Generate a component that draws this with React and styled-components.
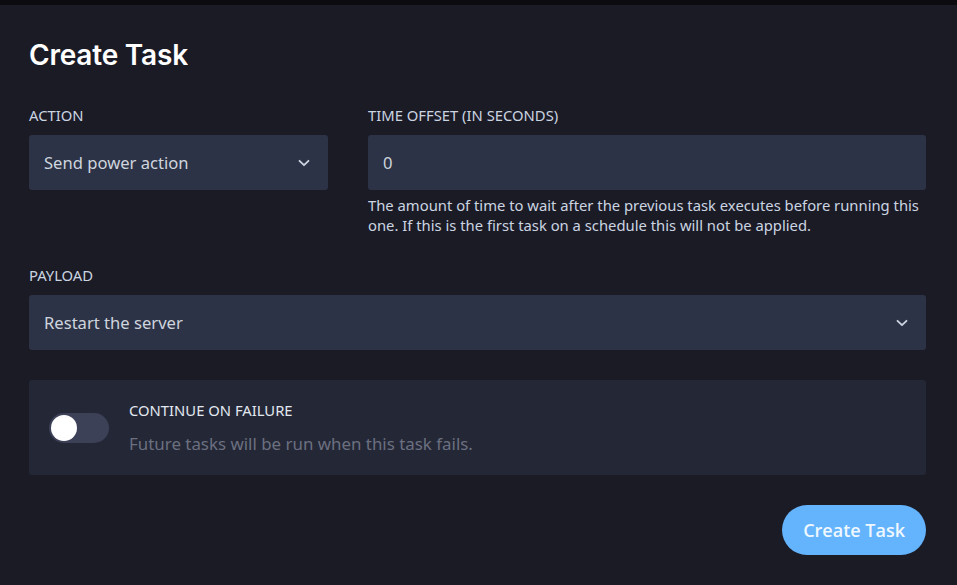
import React, { useState } from "react";
import styled, { createGlobalStyle } from "styled-components";

const GlobalStyle = createGlobalStyle`
  html, body {
    margin: 0;
    padding: 0;
    background: #1b1b26;
  }
  body {
    font-family: "Noto Sans", "Open Sans", sans-serif;
  }
`;

const TopStrip = styled.div`
  height: 5px;
  background: #0b0b10;
`;

const Page = styled.div`
  padding: 30px 31px 30px 29px;
  background: #1b1b26;
  color: #e2e8f0;
`;

const Title = styled.h2`
  margin: 0 0 30px;
  font-family: Inter, "Noto Sans", sans-serif;
  font-size: 28px;
  font-weight: 600;
  line-height: 40px;
  color: #ffffff;
  letter-spacing: -0.2px;
`;

const Row = styled.div`
  display: flex;
  gap: 40px;
`;

const Field = styled.div`
  display: flex;
  flex-direction: column;
  width: ${(p) => (p.width ? `${p.width}px` : "auto")};
  flex: ${(p) => (p.width ? "none" : 1)};
  margin-bottom: ${(p) => p.mb || 0}px;
`;

const Label = styled.label`
  font-size: 14.8px;
  line-height: 20px;
  color: #cbd5e1;
  text-transform: uppercase;
  margin-bottom: 10px;
`;

const Box = styled.div`
  height: 55px;
  box-sizing: border-box;
  display: flex;
  align-items: center;
  justify-content: space-between;
  padding: 0 18px 0 15px;
  background: #2d3346;
  border-radius: 3px;
  font-size: 16.6px;
  color: #cfd5de;
`;

const Chevron = () => (
  <svg width="12" height="8" viewBox="0 0 12 8" fill="none" stroke="#cbd5e1" strokeWidth="1.8" strokeLinecap="round" strokeLinejoin="round">
    <path d="M1.5 1.8l4.5 4.4 4.5-4.4" />
  </svg>
);

const Help = styled.p`
  margin: 5px 0 0;
  font-size: 14.8px;
  line-height: 20px;
  color: #cbd5e1;
`;

const Card = styled.div`
  margin-top: 30px;
  height: 95px;
  box-sizing: border-box;
  background: #242736;
  border-radius: 3px;
  display: flex;
  align-items: center;
  padding: 0 20px;
  gap: 20px;
`;

const Track = styled.button`
  width: 60px;
  height: 30px;
  border: none;
  padding: 0;
  border-radius: 15px;
  background: ${(p) => (p.on ? "#3b82f6" : "#3d4157")};
  position: relative;
  cursor: pointer;
  flex: none;
  margin-top: 1px;
`;

const Knob = styled.span`
  position: absolute;
  top: 2px;
  left: ${(p) => (p.on ? "32px" : "2px")};
  width: 26px;
  height: 26px;
  border-radius: 50%;
  background: #ffffff;
  transition: left 0.15s;
`;

const CardText = styled.div`
  display: flex;
  flex-direction: column;
`;

const CardTitle = styled.span`
  font-size: 14.8px;
  line-height: 20px;
  color: #e2e8f0;
  text-transform: uppercase;
`;

const CardDesc = styled.span`
  margin-top: 13px;
  font-size: 16.9px;
  line-height: 22px;
  color: #6b7080;
`;

const Footer = styled.div`
  display: flex;
  justify-content: flex-end;
  margin-top: 30px;
`;

const Submit = styled.button`
  height: 50px;
  padding: 0 21px;
  border: none;
  border-radius: 25px;
  background: #63b3fd;
  color: #f0f8ff;
  font-family: "Open Sans", "Noto Sans", sans-serif;
  font-size: 18px;
  font-weight: 600;
  cursor: pointer;
`;

export default function App() {
  const [on, setOn] = useState(false);
  return (
    <>
      <GlobalStyle />
      <TopStrip />
      <Page>
        <Title>Create Task</Title>
        <Row>
          <Field width={299} mb={30}>
            <Label>Action</Label>
            <Box>
              <span>Send power action</span>
              <Chevron />
            </Box>
          </Field>
          <Field mb={30}>
            <Label>Time offset (in seconds)</Label>
            <Box>
              <span>0</span>
            </Box>
            <Help>
              The amount of time to wait after the previous task executes before running this one. If
              this is the first task on a schedule this will not be applied.
            </Help>
          </Field>
        </Row>
        <Field>
          <Label>Payload</Label>
          <Box>
            <span>Restart the server</span>
            <Chevron />
          </Box>
        </Field>
        <Card>
          <Track on={on ? 1 : 0} onClick={() => setOn(!on)}>
            <Knob on={on ? 1 : 0} />
          </Track>
          <CardText>
            <CardTitle>Continue on failure</CardTitle>
            <CardDesc>Future tasks will be run when this task fails.</CardDesc>
          </CardText>
        </Card>
        <Footer>
          <Submit>Create Task</Submit>
        </Footer>
      </Page>
    </>
  );
}
